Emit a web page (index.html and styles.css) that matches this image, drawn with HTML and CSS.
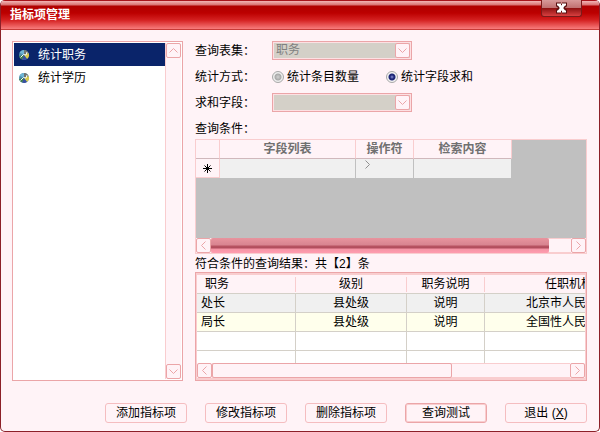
FILE: index.html
```html
<!DOCTYPE html>
<html lang="zh-CN">

<head>
    <meta charset="utf-8">
    <title>指标项管理</title>
    <link rel="stylesheet" href="styles.css">
</head>

<body>
    <!-- shared icons -->
    <svg class="defs" width="0" height="0" aria-hidden="true">
        <symbol id="up" viewBox="0 0 9 9"><path d="M.5 6.5 4.5 2.5 8.5 6.5" /></symbol>
        <symbol id="down" viewBox="0 0 9 9"><path d="M.5 2.5 4.5 6.5 8.5 2.5" /></symbol>
        <symbol id="left" viewBox="0 0 9 9"><path d="M6.5 .5 2.5 4.5 6.5 8.5" /></symbol>
        <symbol id="right" viewBox="0 0 9 9"><path d="M2.5 .5 6.5 4.5 2.5 8.5" /></symbol>
        <symbol id="chart" viewBox="0 0 12 12">
            <circle cx="6" cy="6" r="5" fill="#4f8fae" />
            <path d="M6 6 1.500 3.500A5 5 0 0 1 6 1Z" fill="#6fb6d6" />
            <path d="M6 6V1A5 5 0 0 1 10.5 4Z" fill="#6f7470" />
            <path d="M6 6 10.5 4A5 5 0 0 1 9 10Z" fill="#d9c94a" />
            <path d="M6 6 9 10A5 5 0 0 1 4 10.5Z" fill="#3a50a0" />
            <path d="M6 6 4 10.5A5 5 0 0 1 1 7Z" fill="#3f7d4a" />
            <path d="M2.500 8.500 5.500 5.500 8 6 9 3" fill="none" stroke="#f4f8f8" />
        </symbol>
    </svg>

    <div class="window">
        <header class="titlebar">
            <h1 class="title">指标项管理</h1>
            <button class="close" type="button" aria-label="关闭">
                <svg width="13" height="12" viewBox="0 0 13 12">
                    <path d="M3.500 2.500 9.500 9.500M9.500 2.500 3.500 9.500" stroke="#5a1010" stroke-width="5" />
                    <path d="M1 2.500H6M7 2.500H12M1 9.500H6M7 9.500H12" stroke="#5a1010" stroke-width="4" />
                    <path d="M4 2.500 9 9.500M9 2.500 4 9.500" stroke="#fff" stroke-width="3" />
                    <path d="M2 2.500H6M7 2.500H11M2 9.500H6M7 9.500H11" stroke="#fff" stroke-width="2" />
                </svg>
            </button>
        </header>

        <main class="main">
            <nav class="sidebar">
                <ul class="list">
                    <li><a class="item selected" href="#"><svg class="icon"><use href="#chart" /></svg>统计职务</a></li>
                    <li><a class="item" href="#"><svg class="icon"><use href="#chart" /></svg>统计学历</a></li>
                </ul>
                <div class="vscroll">
                    <button class="arrow" type="button" aria-label="向上"><svg><use href="#up" /></svg></button>
                    <button class="arrow" type="button" aria-label="向下"><svg><use href="#down" /></svg></button>
                </div>
            </nav>

            <section class="content">
                <form class="fields">
                    <div class="row">
                        <label class="label" for="tables">查询表集：</label>
                        <div class="combo">
                            <select id="tables" disabled>
                                <option>职务</option>
                            </select>
                            <span class="arrow"><svg><use href="#down" /></svg></span>
                        </div>
                    </div>
                    <div class="row">
                        <span class="label">统计方式：</span>
                        <div class="radios">
                            <label class="radio"><input type="radio" name="mode">统计条目数量</label>
                            <label class="radio"><input type="radio" name="mode" checked>统计字段求和</label>
                        </div>
                    </div>
                    <div class="row">
                        <label class="label" for="sum">求和字段：</label>
                        <div class="combo">
                            <select id="sum" disabled></select>
                            <span class="arrow"><svg><use href="#down" /></svg></span>
                        </div>
                    </div>
                    <div class="row">
                        <span class="label" id="conditions">查询条件：</span>
                    </div>
                </form>

                <div class="grid">
                    <div class="grid-body">
                        <table class="conditions" aria-labelledby="conditions">
                            <colgroup>
                                <col class="c-mark">
                                <col class="c-field">
                                <col class="c-op">
                                <col class="c-value">
                            </colgroup>
                            <thead>
                                <tr>
                                    <th></th>
                                    <th>字段列表</th>
                                    <th>操作符</th>
                                    <th>检索内容</th>
                                </tr>
                            </thead>
                            <tbody>
                                <tr>
                                    <th><svg class="star" width="9" height="9" viewBox="0 0 9 9"><path d="M4.5 0V9M0 4.5H9M1.500 1.500 7.500 7.500M7.500 1.500 1.500 7.500" /></svg></th>
                                    <td></td>
                                    <td><svg class="op" width="9" height="9"><use href="#right" /></svg></td>
                                    <td></td>
                                </tr>
                            </tbody>
                        </table>
                    </div>
                    <div class="hscroll">
                        <button class="arrow" type="button" aria-label="向左"><svg><use href="#left" /></svg></button>
                        <div class="track"><div class="thumb active"></div></div>
                        <button class="arrow" type="button" aria-label="向右"><svg><use href="#right" /></svg></button>
                    </div>
                </div>

                <p class="summary" id="summary">符合条件的查询结果：共【2】条</p>

                <div class="results-box">
                    <div class="results-body">
                        <table class="results" aria-labelledby="summary">
                            <colgroup>
                                <col class="r-post">
                                <col class="r-level">
                                <col class="r-note">
                                <col class="r-org">
                            </colgroup>
                            <thead>
                                <tr>
                                    <th><span>职务</span></th>
                                    <th><span>级别</span></th>
                                    <th><span>职务说明</span></th>
                                    <th><span>任职机构</span></th>
                                </tr>
                            </thead>
                            <tbody>
                                <tr class="odd">
                                    <td>处长</td>
                                    <td>县处级</td>
                                    <td>说明</td>
                                    <td>北京市人民</td>
                                </tr>
                                <tr class="even">
                                    <td>局长</td>
                                    <td>县处级</td>
                                    <td>说明</td>
                                    <td>全国性人民</td>
                                </tr>
                                <tr><td></td><td></td><td></td><td></td></tr>
                                <tr><td></td><td></td><td></td><td></td></tr>
                            </tbody>
                        </table>
                    </div>
                    <div class="hscroll">
                        <button class="arrow" type="button" aria-label="向左"><svg><use href="#left" /></svg></button>
                        <div class="track"><div class="thumb"></div></div>
                        <button class="arrow" type="button" aria-label="向右"><svg><use href="#right" /></svg></button>
                    </div>
                </div>
            </section>
        </main>

        <footer class="buttons">
            <button class="btn" type="button">添加指标项</button>
            <button class="btn" type="button">修改指标项</button>
            <button class="btn" type="button">删除指标项</button>
            <button class="btn default" type="button">查询测试</button>
            <button class="btn" type="button">退出 (<u>X</u>)</button>
        </footer>
    </div>
</body>

</html>
```

FILE: styles.css
```css
:root {
    --bg: #fff3f7;
    --line: #eba5a8;
    --soft: #f9cdcf;
    --frame: #8c2028;
    --face: #d4d0c8;
}

* {
    box-sizing: border-box;
}

body {
    margin: 0;
    background: #fff;
    color: #000;
    font: 12px/16px "Liberation Sans", "Noto Sans CJK SC", sans-serif;
}

button,
select,
input {
    font: inherit;
    margin: 0;
    padding: 0;
}

svg {
    display: block;
}

.defs {
    position: absolute;
}

.window {
    display: flex;
    flex-direction: column;
    min-height: 100vh;
    background: var(--bg);
    border: 1px solid var(--frame);
    border-top: 0;
    border-radius: 5px;
    overflow: hidden;
}

/* Title bar */
.titlebar {
    display: flex;
    justify-content: space-between;
    align-items: flex-start;
    height: 30px;
    padding: 0 17px 0 9px;
    border-bottom: 1px solid #c83c38;
    background: linear-gradient(#a8141c 0, #a8141c 1px, #f2b4b4 1px, #d87070 5px, #b00000 6px, #bc0000 13px, #d42020 20px, #f87c7c 29px);
}

.title {
    margin: 0;
    padding-top: 6px;
    color: #fff;
    font-size: 12px;
    line-height: 18px;
}

.close {
    display: flex;
    justify-content: center;
    align-items: center;
    width: 41px;
    height: 17px;
    border: 1px solid #7c1a1a;
    border-top: 0;
    border-radius: 0 0 3px 3px;
    background: linear-gradient(#d89a9a 0, #c07070 8px, #8c1010 8px, #d84040 16px);
}

/* Layout */
.main {
    display: flex;
    flex: 1;
    gap: 12px;
    padding: 11px 12px 0 11px;
}

.content {
    display: flex;
    flex: 1;
    flex-direction: column;
    min-width: 0;
}

/* Left list */
.sidebar {
    display: flex;
    width: 171px;
    padding: 1px;
    border: 1px solid var(--line);
    background: #fff;
}

.list {
    flex: 1;
    margin: 0;
    padding: 0;
    list-style: none;
}

.item {
    display: flex;
    align-items: center;
    gap: 8px;
    height: 23px;
    padding-left: 4px;
    color: #000;
    text-decoration: none;
}

.item.selected {
    background: #0a246a;
    color: #fff;
}

.icon {
    width: 12px;
    height: 12px;
}

.arrow {
    display: flex;
    flex: none;
    justify-content: center;
    align-items: center;
    width: 15px;
    height: 15px;
    border: 1px solid var(--line);
    border-radius: 2px;
    background: var(--bg);
}

.arrow svg {
    width: 9px;
    height: 9px;
    fill: none;
    stroke: var(--line);
}

.vscroll {
    display: flex;
    flex-direction: column;
    justify-content: space-between;
    border-left: 1px solid var(--soft);
    background: var(--bg);
}

/* Form */
.fields {
    display: grid;
    gap: 7px;
    padding-bottom: 1px;
}

.row {
    display: flex;
    align-items: center;
    height: 19px;
}

.label {
    width: 77px;
}

.combo {
    position: relative;
    width: 140px;
    height: 19px;
    padding: 1px;
    border: 1px solid var(--line);
    background: #fde0e3;
}

.combo select {
    display: block;
    width: 100%;
    height: 15px;
    padding-left: 2px;
    appearance: none;
    border: 0;
    border-radius: 0;
    background: var(--face);
    color: #808080;
    line-height: 15px;
    opacity: 1;
}

.combo .arrow {
    position: absolute;
    top: 1px;
    right: 1px;
    pointer-events: none;
}

.radios {
    display: flex;
    gap: 27px;
}

.radio {
    display: flex;
    align-items: center;
    gap: 3px;
}

.radio input {
    width: 12px;
    height: 12px;
    appearance: none;
    border: 1px solid #a8a8a8;
    border-radius: 50%;
    background: radial-gradient(circle at 5px 5px, #d0d0d0 0, #a8a8a8 3px, #eee 4px);
}

.radio input:checked {
    background: radial-gradient(circle at 5px 5px, #9098e0 0, #202878 2px, #202878 3px, #f4f4f4 4px);
}

/* Conditions grid */
.grid {
    border: 1px solid var(--soft);
    background: #c0c0c0;
}

.grid-body {
    height: 98px;
    overflow: hidden;
}

table {
    border-collapse: separate;
    border-spacing: 0;
    table-layout: fixed;
}

th,
td {
    padding: 0;
}

.conditions {
    width: 316px;
}

.c-mark {
    width: 24px;
}

.c-field {
    width: 136px;
}

.c-op {
    width: 58px;
}

.conditions th {
    height: 19px;
    border-right: 1px solid var(--soft);
    border-bottom: 1px solid #d0b8bc;
    background: var(--bg);
    color: #707070;
    line-height: 16px;
}

.conditions tbody th {
    border-bottom-color: var(--soft);
}

.conditions td {
    border-right: 1px solid #c0c0c0;
    background: #f0f0f0;
    vertical-align: top;
}

.star {
    margin: 0 auto;
    stroke: #000;
}

.op {
    margin: 1px 0 0 7px;
    fill: none;
    stroke: #909090;
}

/* Horizontal scrollbars */
.hscroll {
    display: flex;
    height: 15px;
    background: var(--bg);
}

.track {
    flex: 1;
    border: 1px solid var(--soft);
    border-width: 1px 0;
}

.thumb {
    width: 67%;
    height: 15px;
    margin-top: -1px;
    border: 1px solid var(--line);
    border-radius: 2px;
}

.thumb.active {
    width: 94%;
    border: 0;
    background: linear-gradient(#e8949e 0, #d88490 7px, #b85462 8px, #b04c5c 10px, #f494a4 11px, #ff9cb0 15px);
}

/* Results */
.summary {
    margin: 0;
    padding-top: 3px;
    line-height: 15px;
}

.results-box {
    padding: 2px 1px;
    border: 1px solid var(--line);
    background: var(--soft);
}

.results-body {
    height: 88px;
    overflow: hidden;
    background: #fff;
}

.results {
    width: 455px;
}

.r-post {
    width: 99px;
}

.r-level {
    width: 111px;
}

.r-note {
    width: 78px;
}

.results th {
    height: 19px;
    border-bottom: 1px solid var(--face);
    background: var(--bg);
    font-weight: normal;
}

.results th span {
    display: block;
    height: 15px;
    border-right: 1px solid var(--soft);
    line-height: 15px;
}

.results td {
    height: 19px;
    border-right: 1px solid var(--face);
    border-bottom: 1px solid var(--face);
    text-align: center;
}

.results th:first-child {
    padding-left: 8px;
    text-align: left;
}

.results td:first-child {
    padding-left: 4px;
    text-align: left;
}

.results th:last-child {
    padding-left: 60px;
    text-align: left;
}

.results td:last-child {
    padding-left: 41px;
    text-align: left;
}

.odd {
    background: #f0f0f0;
}

.even {
    background: #ffffec;
}

/* Bottom buttons */
.buttons {
    display: flex;
    justify-content: flex-end;
    gap: 18px;
    padding: 22px 12px 8px;
}

.btn {
    width: 82px;
    height: 20px;
    border: 1px solid #f5bdc0;
    border-radius: 3px;
    background: var(--bg);
    color: #000;
    line-height: 16px;
}

.btn.default {
    border-color: var(--line);
    box-shadow: inset 0 0 0 1px var(--soft);
}
```
